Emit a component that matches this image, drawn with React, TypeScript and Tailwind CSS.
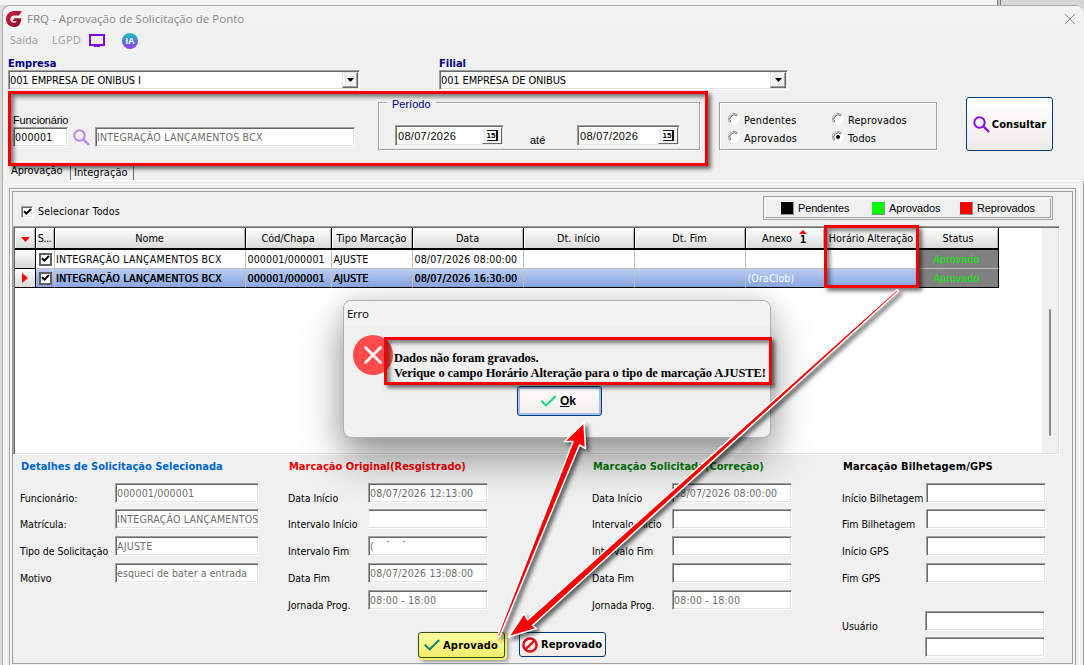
import type { ReactNode } from "react";

const sunken =
  "border border-t-[#a0a0a0] border-l-[#a0a0a0] border-r-white border-b-white shadow-[inset_1px_1px_#696969,inset_-1px_-1px_#e3e3e3]";
const etched = "border border-[#a0a0a0] shadow-[inset_1px_1px_#fff,1px_1px_#fff]";
const sans = "font-['Liberation_Sans',sans-serif] text-[11px]";

function Field({ children, className = "" }: { children?: ReactNode; className?: string }) {
  return (
    <div className={`h-5 shrink-0 overflow-hidden whitespace-nowrap bg-white pl-px leading-[18px] ${sunken} ${className}`}>
      {children}
    </div>
  );
}

function Combo({ children }: { children: ReactNode }) {
  return (
    <div className={`flex h-5 bg-white py-px pl-px leading-[17px] tracking-[-0.13px] ${sunken}`}>
      <span className="flex-1">{children}</span>
      <span className="mr-px flex w-[16px] items-center justify-center border border-t-[#e3e3e3] border-l-[#e3e3e3] border-r-[#696969] border-b-[#696969] bg-[#f0f0f0] shadow-[inset_-1px_-1px_#a0a0a0,inset_1px_1px_#fff]">
        <svg width="7" height="4" viewBox="0 0 7 4"><path d="M0 0h7L3.5 4z" /></svg>
      </span>
    </div>
  );
}

function DateField({ children, className = "" }: { children: ReactNode; className?: string }) {
  return (
    <div className={`flex h-[21px] bg-white p-px pl-[2px] leading-[18px] ${sans} ${sunken} ${className}`}>
      <span className="flex-1 tracking-[0.3px]">{children}</span>
      <span className="flex w-5 items-center justify-center border border-t-white border-l-white border-r-[#696969] border-b-[#696969] bg-[#f0f0f0]">
        <span className="h-[11px] w-[11px] border-t border-r-2 border-b border-[#111] bg-white text-center font-['Liberation_Sans'] text-[8px] leading-[9px] font-bold">15</span>
      </span>
    </div>
  );
}

function Radio({ label, on = false }: { label: string; on?: boolean }) {
  return (
    <div className="flex h-[18px] items-center gap-1 text-[10.8px]">
      <svg width="12" height="12" viewBox="0 0 12 12" className="shrink-0">
        <circle cx="6" cy="6" r="5" fill="#fff" />
        <path d="M2.1 9.9A5.5 5.5 0 0 1 9.9 2.1" fill="none" stroke="#a0a0a0" />
        <path d="M2.9 9.1A4.4 4.4 0 0 1 9.1 2.9" fill="none" stroke="#696969" />
        <path d="M2.1 9.9A5.5 5.5 0 0 0 9.9 2.1" fill="none" stroke="#fff" />
        {on && <circle cx="6" cy="6" r="2" />}
      </svg>
      <span className="pt-1 tracking-[0.18px]">{label}</span>
    </div>
  );
}

function Magnifier({ color, className = "" }: { color: string; className?: string }) {
  return (
    <svg width="17" height="17" viewBox="0 0 17 17" fill="none" stroke={color} className={`shrink-0 ${className}`}>
      <circle cx="6.5" cy="6.5" r="5.2" strokeWidth="2" />
      <path d="M10.4 10.4 16 16" strokeWidth="2.4" />
    </svg>
  );
}

function Check({ color, w = 16, h = 12 }: { color: string; w?: number; h?: number }) {
  return (
    <svg width={w} height={h} viewBox="0 0 16 12" fill="none" stroke={color} strokeWidth="2" className="shrink-0">
      <path d="M.8 5.8 5.6 10.4 15.2 1" />
    </svg>
  );
}

function Tick() {
  return (
    <svg width="9" height="8" viewBox="0 0 9 8" fill="none" stroke="#000" strokeWidth="2">
      <path d="M1 3.2 3.4 5.6 8 1" />
    </svg>
  );
}

const redBox =
  "pointer-events-none absolute z-20 border-[3px] border-[#f50000] shadow-[3px_3px_4px_rgba(0,0,0,0.55),inset_3px_3px_4px_rgba(0,0,0,0.5)]";

const cols = [
  { t: "", w: "w-[21px]" },
  { t: "S...", w: "w-[19px]" },
  { t: "Nome", w: "w-[191px]" },
  { t: "Cód/Chapa", w: "w-[86px]" },
  { t: "Tipo Marcação", w: "w-[81px]" },
  { t: "Data", w: "w-[111px]" },
  { t: "Dt. início", w: "w-[111px]" },
  { t: "Dt. Fim", w: "w-[111px]" },
  { t: "Anexo", w: "w-[79px]" },
  { t: "Horário Alteração", w: "w-[94px]" },
  { t: "Status", w: "w-[80px]" },
];

const rows = [
  ["", "", "INTEGRAÇÃO LANÇAMENTOS BCX", "000001/000001", "AJUSTE", "08/07/2026 08:00:00", "", "", "", "", "Aprovado"],
  ["", "", "INTEGRAÇÃO LANÇAMENTOS BCX", "000001/000001", "AJUSTE", "08/07/2026 16:30:00", "", "", "(OraClob)", "", "Aprovado"],
];

function Header() {
  return (
    <div className="flex h-[22px]">
      {cols.map((c, i) => (
        <div
          key={i}
          className={`relative flex shrink-0 items-center justify-center overflow-hidden border-r border-b-2 border-black bg-gradient-to-b from-white to-[#d9d9d9] pt-[3px] whitespace-nowrap shadow-[inset_1px_1px_#fff,inset_-1px_0_#b4b4b4] ${c.w} ${i === 1 ? "tracking-[-0.5px]" : ""} ${i === 9 ? "text-[10.7px]" : "text-[10.8px]"} ${i === 0 ? "pr-0" : "pr-px"}`}
        >
          {i === 0 && <svg width="9" height="5" viewBox="0 0 9 5"><path d="M0 0h9L4.500 5z" fill="#f00" /></svg>}
          {i === 8 ? (
            <span className="flex items-center gap-[7px]">
              {c.t}
              <span className="flex flex-col items-center pb-[4px]">
                <svg width="8" height="4" viewBox="0 0 8 4"><path d="M0 4h8L4 0z" fill="#f00" /></svg>
                <b className="font-['DejaVu_Sans_Mono'] text-[11px] leading-[11px]">1</b>
              </span>
            </span>
          ) : (
            c.t
          )}
        </div>
      ))}
    </div>
  );
}

function Row({ data, active }: { data: string[]; active: boolean }) {
  return (
    <div className={`flex h-[19px] w-[984px] ${active ? "bg-gradient-to-b from-[#b9cbf0] to-[#87a5e0]" : ""}`}>
      {data.map((v, i) => {
        const line = active ? "border-b border-b-black" : "border-b border-b-[#c0c0c0]";
        if (i === 0)
          return (
            <div key={i} className="flex w-[21px] shrink-0 items-center justify-center border-r border-b border-black bg-gradient-to-b from-white to-[#d9d9d9]">
              {active && <svg width="6" height="10" viewBox="0 0 6 10"><path d="M0 0v10l6-5z" fill="#f00" /></svg>}
            </div>
          );
        if (i === 1)
          return (
            <div key={i} className={`flex w-[19px] shrink-0 items-center justify-center border-r border-r-[#c0c0c0] ${line}`}>
              <span className="flex h-[13px] w-[13px] items-center justify-center border-2 border-[#5f5f5f] bg-white"><Tick /></span>
            </div>
          );
        const status = i === 10;
        return (
          <div
            key={i}
            className={`shrink-0 overflow-hidden border-r leading-[19px] whitespace-nowrap ${line} ${cols[i].w} ${
              status ? "border-r-black bg-[#808080] pr-[5px] pl-px text-center tracking-[0.15px] text-[#00f000]" : "border-r-[#c0c0c0]"
            } ${active && i < 8 ? "[text-shadow:0.25px_0_#000]" : ""} ${i === 8 ? "text-white" : ""} ${i === 2 ? "pl-px tracking-[0.24px]" : ""} ${i > 2 && i < 10 ? "pl-[1.5px] tracking-[0.15px]" : ""}`}
          >
            {v}
          </div>
        );
      })}
    </div>
  );
}

function LegendItem({ label, swatch }: { label: string; swatch: string }) {
  return (
    <div className="flex items-center gap-1">
      <span className={`h-[14px] w-[14px] border border-t-white border-l-white border-r-[#909090] border-b-[#909090] ${swatch}`} />
      <span className={`${sans} pt-px tracking-[-0.15px]`}>{label}</span>
    </div>
  );
}

type Line = { label: string; value?: ReactNode; h?: string; field?: string };

function Details({ title, color, lines, labelW, fieldW, className }: { title: string; color: string; lines: Line[]; labelW: string; fieldW: string; className: string }) {
  return (
    <section className={`shrink-0 ${className}`}>
      <h2 className={`ml-px h-[25px] text-[11px] leading-[17px] font-bold whitespace-nowrap ${color}`}>{title}</h2>
      {lines.map((l, i) => (
        <div key={i} className={`flex ${l.h ?? "h-[27px]"}`}>
          <span className={`shrink-0 pt-[8px] leading-[14px] tracking-[-0.03px] whitespace-nowrap ${labelW}`}>{l.label}</span>
          <Field className={`text-[#6d6d6d] ${fieldW} ${l.field ?? ""}`}>{l.value}</Field>
        </div>
      ))}
    </section>
  );
}

export default function App() {
  return (
    <div className="relative flex h-[665px] w-[1084px] flex-col overflow-hidden bg-[#dcdcdc] font-['DejaVu_Sans_Condensed','DejaVu_Sans',sans-serif] text-[10.5px] text-black">
      <div className="flex h-[5px] shrink-0 bg-[#f3f5f4]">
        <div className="ml-[997px] w-[4px] border-x border-[#777] bg-[#ccc]" />
        <div className="flex-1 bg-[#d8d8d8]" />
      </div>

      <div className="ml-[2px] flex flex-1 flex-col rounded-t-lg border-t border-l border-[#ababab] bg-[#f0f0f0]">
        <header className="flex h-[25px] shrink-0 items-center rounded-t-lg bg-[#f3f3f3] pl-[3px]">
          <svg width="16" height="16" viewBox="0 0 16 16">
            <defs>
              <linearGradient id="g" x1="0" y1="0" x2="1" y2="1"><stop stopColor="#e0193c" /><stop offset="1" stopColor="#7d1230" /></linearGradient>
            </defs>
            <path d="M16 0H8C3.500 0 0 3.600 0 8s3.500 8 8 8c4.200 0 7-2.600 7.300-8.800H8.200L6.400 10.300h4.300c-.6 1-1.600 1.500-2.900 1.500-2 0-3.400-1.600-3.400-3.600S5.800 4.400 8 4.400h5z" fill="url(#g)" />
          </svg>
          <span className="ml-[5px] font-['Open_Sans','Noto_Sans',sans-serif] text-[11.5px] tracking-[0.03px] text-[#868686]">FRQ - Aprovação de Solicitação de Ponto</span>
          <svg width="10" height="10" viewBox="0 0 10 10" stroke="#8a8a8a" className="mr-[9px] ml-auto"><path d="M0 0 10 10M10 0 0 10" /></svg>
        </header>

        <nav className="flex h-[19px] shrink-0 items-center pl-[7px] font-['Noto_Sans',sans-serif] text-[11px] text-[#a3a3a3]">
          <span className="w-[42px]">Saída</span>
          <span className="w-[37px] tracking-[0.2px]">LGPD</span>
          <svg width="16" height="13" viewBox="0 0 16 13" fill="none" stroke="#7d0be0" strokeWidth="2"><path d="M1 1h14v10H1zM5 12.500h6" /></svg>
          <svg width="16" height="16" viewBox="0 0 16 16" className="ml-[17px]">
            <defs>
              <linearGradient id="ia" x1="0" y1="0" x2="0" y2="1"><stop stopColor="#1fc7b6" /><stop offset=".5" stopColor="#4a78e0" /><stop offset="1" stopColor="#9b3df0" /></linearGradient>
            </defs>
            <circle cx="8" cy="8" r="8" fill="url(#ia)" />
            <text x="8" y="11.300" textAnchor="middle" fontSize="9" fontWeight="bold" fontFamily="Liberation Sans" fill="#fff">IA</text>
          </svg>
        </nav>

        <div className="flex h-[41px] shrink-0 pt-[6px] pl-[5px] text-[11px]">
          <div className="w-[352px]">
            <div className="h-[14px] leading-[15px] font-bold text-[#000080]">Empresa</div>
            <Combo>001 EMPRESA DE ONIBUS I</Combo>
          </div>
          <div className="ml-[79px] w-[349px]">
            <div className="h-[14px] leading-[15px] font-bold text-[#000080]">Filial</div>
            <Combo>001 EMPRESA DE ONIBUS</Combo>
          </div>
        </div>

        <div className="relative flex h-[70px] shrink-0 pl-[10px]">
          <div className={`${redBox} top-0 left-[5px] h-[75px] w-[700px]`} />
          <div className="w-[365px] pt-[22px]">
            <div className={`h-[14px] leading-[14px] tracking-[-0.2px] ${sans}`}>Funcionário</div>
            <div className="flex">
              <Field className="w-[55px] tracking-[0.25px]">000001</Field>
              <Magnifier color="#bd84ea" className="mt-[2px] ml-[5px]" />
              <Field className="ml-[5px] w-[260px] tracking-[0.24px] text-[#6d6d6d]">INTEGRAÇÃO LANÇAMENTOS BCX</Field>
            </div>
          </div>
          <div className={`relative mt-[11px] flex h-[48px] w-[322px] shrink-0 pl-4 ${etched}`}>
            <span className={`absolute -top-[6px] left-[8px] bg-[#f0f0f0] px-[5px] leading-[14px] text-[#000080] ${sans}`}>Período</span>
            <DateField className="mt-[22px] w-[109px]">08/07/2026</DateField>
            <span className={`mt-[30px] ml-[26px] w-[47px] leading-[14px] ${sans}`}>até</span>
            <DateField className="mt-[22px] w-[103px]">08/07/2026</DateField>
          </div>
          <div className={`mt-[11px] ml-[19px] flex h-[48px] w-[218px] shrink-0 pt-[7px] pl-2 ${etched}`}>
            <div className="w-[104px]"><Radio label="Pendentes" /><Radio label="Aprovados" /></div>
            <div><Radio label="Reprovados" /><Radio label="Todos" on /></div>
          </div>
          <button className="mt-[6px] ml-[29px] flex h-[54px] w-[87px] shrink-0 items-center justify-center gap-[2px] rounded-[3px] border border-[#003c74] bg-gradient-to-b from-white to-[#efebe7] text-[11px] font-bold">
            <Magnifier color="#8a12dc" />
            <span className="pt-[2px] tracking-[0.06px]">Consultar</span>
          </button>
        </div>

        <div className="flex h-5 shrink-0">
          <div className="ml-[2px] w-[65px] border-t border-l border-white pl-[5px] text-[11px] leading-[18px] tracking-[-0.12px]">Aprovação</div>
          <div className="flex flex-1 border-b border-white">
            <div className="mt-[2px] w-[64px] border-x border-[#696969] pl-[3px] text-[11px] leading-[19px] tracking-[0.05px]">Integração</div>
          </div>
        </div>

        <div className="flex flex-1 border-r border-l border-r-[#a0a0a0] border-l-white pt-[3px] pr-[3px] pl-[2px]">
          <div className="flex flex-1 flex-col border-x border-t border-white">
            <div className="mt-[3px] mr-[3px] ml-[2px] flex h-[479px] flex-col border border-[#a0a0a0] bg-[#f0f0f0] p-[2px] shadow-[inset_1px_1px_#fff]">
              <div className="flex h-full flex-col border border-[#a0a0a0]">
                <div className="flex h-[34px] shrink-0 pl-2">
                  <div className="flex items-center gap-[5px] pt-[5px]">
                    <span className={`flex h-3 w-3 items-center justify-center bg-white ${sunken}`}><Tick /></span>
                    <span className="tracking-[0.18px]">Selecionar Todos</span>
                  </div>
                  <div className="mt-[4px] mr-[19px] ml-auto flex h-[24px] w-[290px] items-center border border-[#a0a0a0] p-px">
                    <div className="flex h-full w-full items-center border border-t-white border-l-white border-r-[#a0a0a0] border-b-[#a0a0a0] pl-[14px]">
                      <div className="w-[91px]"><LegendItem label="Pendentes" swatch="bg-black" /></div>
                      <div className="w-[88px]"><LegendItem label="Aprovados" swatch="bg-[#00ff00]" /></div>
                      <LegendItem label="Reprovados" swatch="bg-[#ff0000]" />
                    </div>
                  </div>
                </div>

                <div className={`flex h-[229px] w-[1047px] shrink-0 bg-white p-px ${sunken}`}>
                  <div className="relative flex-1">
                    <div className={`${redBox} -top-[3px] left-[809px] h-[63px] w-[95px]`} />
                    <Header />
                    {rows.map((r, i) => <Row key={i} data={r} active={i === 1} />)}
                  </div>
                  <div className="w-[16px] bg-[#f0f0f0] pt-[81px] pl-[7px]"><div className="h-[127px] w-[2px] rounded bg-[#868686]" /></div>
                </div>

                <div className="flex h-[177px] shrink-0 pt-[3px] pl-[7px]">
                  <Details
                    className="w-[268px]" title="Detalhes de Solicitação Selecionada" color="text-[#0066cc]" labelW="w-[95px]" fieldW="w-[144px]"
                    lines={[
                      { label: "Funcionário:", value: "000001/000001", h: "h-[26px]", field: "tracking-[0.15px]" },
                      { label: "Matrícula:", value: "INTEGRAÇÃO LANÇAMENTOS", field: "tracking-[0.2px]" },
                      { label: "Tipo de Solicitação", value: "AJUSTE", field: "tracking-[0.24px]" },
                      { label: "Motivo", value: "esqueci de bater a entrada", field: "tracking-[0.08px]" },
                    ]}
                  />
                  <Details
                    className="w-[304px]" title="Marcação Original(Resgistrado)" color="text-[#f00000]" labelW="w-[80px]" fieldW="w-[120px] tracking-[0.18px]"
                    lines={[
                      { label: "Data Início", value: "08/07/2026 12:13:00", h: "h-[26px]" },
                      { label: "Intervalo Início", field: "border-l-[#f0f0f0]! shadow-[inset_0_1px_#696969,inset_-1px_-1px_#e3e3e3]!" },
                      { label: "Intervalo Fim", value: <><span>(</span><svg width="24" height="10" viewBox="0 0 24 10" className="ml-2 inline-block align-top" fill="#8a8f9c"><path d="M5 4h2v1H5zM21 4h2v1h-2z" /></svg></> },
                      { label: "Data Fim", value: "08/07/2026 13:08:00" },
                      { label: "Jornada Prog.", value: "08:00 - 18:00" },
                    ]}
                  />
                  <Details
                    className="w-[250px]" title="Marcação Solicitada(Correção)" color="text-[#007a00]" labelW="w-[80px]" fieldW="w-[120px] tracking-[0.18px]"
                    lines={[
                      { label: "Data Início", value: "08/07/2026 08:00:00", h: "h-[26px]" },
                      { label: "Intervalo Início" },
                      { label: "Intervalo Fim" },
                      { label: "Data Fim" },
                      { label: "Jornada Prog.", value: "08:00 - 18:00" },
                    ]}
                  />
                  <Details
                    className="w-[206px]" title="Marcação Bilhetagem/GPS" color="text-black tracking-[0.15px]" labelW="w-[84px]" fieldW="w-[120px]"
                    lines={[
                      { label: "Início Bilhetagem", h: "h-[26px]" },
                      { label: "Fim Bilhetagem" },
                      { label: "Início GPS" },
                      { label: "Fim GPS", h: "h-[48px]" },
                      { label: "Usuário", h: "h-[26px]", field: "-ml-px" },
                      { label: "", field: "-ml-px" },
                    ]}
                  />
                </div>

                <div className="flex pl-[405px]">
                  <button className="flex h-[26px] w-[87px] items-center gap-[3px] rounded-[3px] border border-[#2e5312] bg-gradient-to-b from-[#ffffa0] to-[#f0ec6c] pl-[5px] text-[11px] font-bold shadow-[1px_1px_0_1px_#f3ef6a,3px_3px_4px_rgba(0,0,0,.5)]">
                    <Check color="#12806a" /><span className="pt-[2px] tracking-[0.2px]">Aprovado</span>
                  </button>
                  <button className="ml-[14px] flex h-[25px] w-[87px] items-center gap-[3px] rounded-[3px] border border-[#003c74] bg-gradient-to-b from-white to-[#efebe7] pl-[2px] text-[11px] font-bold">
                    <svg width="16" height="16" viewBox="0 0 16 16" fill="none" stroke="#e0101c" strokeWidth="2.500" className="shrink-0"><circle cx="8" cy="8" r="6.600" /><path d="M3.500 12.300 12.500 3.700" /></svg>
                    <span className="pt-px tracking-[0.12px]">Reprovado</span>
                  </button>
                </div>
              </div>
            </div>
          </div>
        </div>
      </div>

      <div className="absolute top-[300px] left-[343px] z-10 flex h-[138px] w-[428px] flex-col rounded-lg border border-[#b0b0b0] bg-[#f0f0f0] shadow-[0_20px_42px_rgba(0,0,0,0.42),0_0_20px_rgba(0,0,0,0.10)]">
        <div className="h-[25px] rounded-t-lg bg-[#f3f3f3] pl-[3px] font-['Open_Sans','Noto_Sans',sans-serif] text-[11.500px] leading-[26px] tracking-[-0.3px]">Erro</div>
        <div className="flex h-[60px] pt-[9px] pl-[9px]">
          <svg width="40" height="40" viewBox="0 0 40 40" className="shrink-0">
            <circle cx="20" cy="20" r="20" fill="#ff4b4b" />
            <path d="m12.500 12.500 15 15m0-15-15 15" stroke="#fff" strokeWidth="2.800" strokeLinecap="round" />
          </svg>
          <p className="mt-[16px] ml-px font-['Liberation_Serif',serif] text-[12.5px] leading-[15px] font-bold tracking-[-0.08px] whitespace-nowrap">
            Dados não foram gravados.<br />Verique o campo Horário Alteração para o tipo de marcação AJUSTE!
          </p>
        </div>
        <button className="ml-[173px] flex h-[30px] w-[85px] shrink-0 items-center gap-[3px] rounded-[3px] border border-[#003c74] bg-gradient-to-b from-white to-[#efebe7] pl-[22px] font-['Liberation_Sans'] text-[12px] font-bold shadow-[inset_0_0_0_2px_#a6bff2,inset_0_-2px_#5f7fe6]">
          <Check color="#0fdc7c" w={17} h={12} /><span><u>O</u>k</span>
        </button>
        <div className={`${redBox} top-[36px] left-[40px] h-[48px] w-[388px]`} />
      </div>

      <svg className="pointer-events-none absolute inset-0 z-30 drop-shadow-[3px_3px_2px_rgba(0,0,0,0.6)]" width="1084" height="665" viewBox="0 0 1084 665" fill="#fb0000" stroke="#fff" strokeWidth="1.500" strokeLinejoin="round">
        <path d="M584 422.500 564.500 441.500 573 441.500 497.500 636 499.500 637 579.500 445 585.500 448.500Z" />
        <path d="M508.500 637 524 613.500 527.500 620 897 289.500 898.500 291 532.500 625.500 536.500 628.500Z" />
      </svg>
    </div>
  );
}
